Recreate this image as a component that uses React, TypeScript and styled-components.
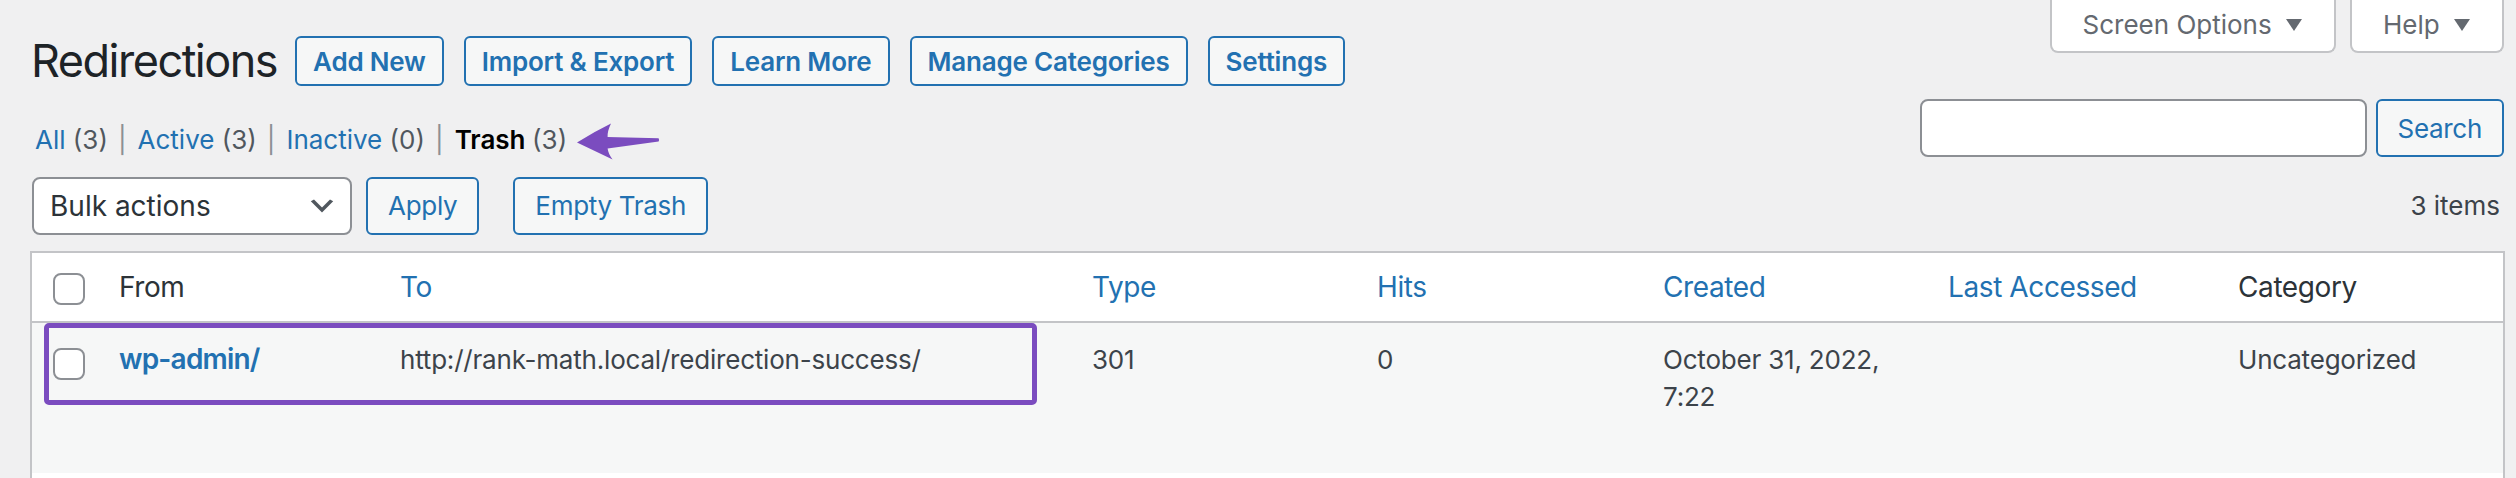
import React from "react"
import styled, { createGlobalStyle } from "styled-components"

const GlobalStyle = createGlobalStyle`
  html, body {
    margin: 0;
    padding: 0;
    background: #f0f0f1;
  }
  body {
    font-family: Inter, "Noto Sans", sans-serif;
    color: #3c434a;
    overflow: hidden;
  }
  * {
    box-sizing: border-box;
  }
`

const columns = [
  { label: "", width: 33.5 },
  { label: "From", width: 140.5 },
  { label: "To", width: 346, sortable: true },
  { label: "Type", width: 142.5, sortable: true },
  { label: "Hits", width: 143, sortable: true },
  { label: "Created", width: 142.5, sortable: true },
  { label: "Last Accessed", width: 145, sortable: true },
  { label: "Category" },
]

const views = [
  { text: "All", count: 3 },
  { text: "Active", count: 3 },
  { text: "Inactive", count: 0 },
  { text: "Trash", count: 3, current: true },
]

const titleActions = ["Add New", "Import & Export", "Learn More", "Manage Categories", "Settings"]

const Arrow = () => (
  <ArrowSvg viewBox="0 0 42 19" aria-hidden="true">
    <path d="M0.5 10.3 Q9 4.8 17.5 0.7 Q15.6 4.6 15.8 7.5 L41.3 8.1 Q41.8 9 41.3 9.8 L15.8 13.3 Q16.2 16.2 18.3 18.7 Q9 14.4 0.5 10.3 Z" />
  </ArrowSvg>
)

const Caret = () => (
  <CaretSvg viewBox="0 0 8 6" aria-hidden="true">
    <polygon points="0,0 8,0 4,6" />
  </CaretSvg>
)

const Chevron = () => (
  <ChevronSvg viewBox="0 0 20 20" aria-hidden="true">
    <path d="M5 6l5 5 5-5 2 1-7 7-7-7 2-1z" />
  </ChevronSvg>
)

const App = () => {
  return (
    <>
      <GlobalStyle />
      <Page>
        <Top>
          <Main>
            <TitleRow>
              <Title>Redirections</Title>
              {titleActions.map(a => (
                <TitleAction key={a} href="#">
                  {a}
                </TitleAction>
              ))}
            </TitleRow>
            <Views>
              {views.map((v, i) => (
                <ViewItem key={v.text}>
                  <ViewLink href="#" $current={v.current}>
                    {v.text} <Count>({v.count})</Count>
                  </ViewLink>
                  {i < views.length - 1 && <Sep>|</Sep>}
                </ViewItem>
              ))}
              <Arrow />
            </Views>
          </Main>
          <Side>
            <MetaLinks>
              <MetaTab>
                Screen Options <Caret />
              </MetaTab>
              <MetaTab>
                Help <Caret />
              </MetaTab>
            </MetaLinks>
            <SearchBox>
              <SearchInput type="search" />
              <Button>Search</Button>
            </SearchBox>
          </Side>
        </Top>

        <TableNav>
          <BulkSelect>
            Bulk actions
            <Chevron />
          </BulkSelect>
          <Button $gap={7}>Apply</Button>
          <Button $gap={17}>Empty Trash</Button>
          <ItemCount>3 items</ItemCount>
        </TableNav>

        <TableWrap>
          <Table>
            <colgroup>
              {columns.map((c, i) => (
                <col key={i} style={c.width ? { width: c.width } : undefined} />
              ))}
            </colgroup>
            <thead>
              <tr>
                <HeadCheck>
                  <Checkbox />
                </HeadCheck>
                {columns.slice(1).map(c => (
                  <HeadCell key={c.label} $link={c.sortable}>
                    {c.label}
                  </HeadCell>
                ))}
              </tr>
            </thead>
            <tbody>
              <Row $alt>
                <CheckCell>
                  <Checkbox />
                </CheckCell>
                <Cell>
                  <RowTitle href="#">wp-admin/</RowTitle>
                </Cell>
                <Cell>http://rank-math.local/redirection-success/</Cell>
                <Cell>301</Cell>
                <Cell>0</Cell>
                <Cell>October 31, 2022, 7:22</Cell>
                <Cell />
                <Cell>Uncategorized</Cell>
              </Row>
              <Row>
                <Cell colSpan={8} />
              </Row>
            </tbody>
          </Table>
          <Highlight />
        </TableWrap>
      </Page>
    </>
  )
}

export default App

const Page = styled.div`
  zoom: 2;
  height: 239px;
  overflow: hidden;
  padding: 0 6px 0 15px;
  font-size: 13px;
`

const Top = styled.div`
  display: flex;
  justify-content: space-between;
  height: 82.8px;
`

const Main = styled.div`
  display: flex;
  flex-direction: column;
`

const TitleRow = styled.div`
  display: flex;
  align-items: center;
  padding-top: 15.5px;
`

const Title = styled.h1`
  margin: 0 9px 0 0.5px;
  font-size: 22.5px;
  font-weight: 400;
  line-height: 30px;
  letter-spacing: -0.75px;
  color: #1d2327;
`

const TitleAction = styled.a`
  display: inline-flex;
  align-items: center;
  height: 25px;
  padding: 0 8px;
  border: 1px solid #2271b1;
  border-radius: 3px;
  background: #f6f7f7;
  color: #2271b1;
  font-size: 13px;
  font-weight: 600;
  letter-spacing: -0.1px;
  text-decoration: none;
  white-space: nowrap;
  & + & {
    margin-left: 10px;
  }
`

const Views = styled.ul`
  display: flex;
  align-items: center;
  margin: 11.3px 0 0 2.5px;
  padding: 0;
  list-style: none;
  font-size: 13px;
  line-height: 26px;
  color: #646970;
`

const ViewItem = styled.li`
  display: flex;
  white-space: pre;
`

const ViewLink = styled.a<{ $current?: boolean }>`
  color: ${p => (p.$current ? "#000" : "#2271b1")};
  font-weight: ${p => (p.$current ? 600 : 400)};
  text-decoration: none;
`

const Count = styled.span`
  color: #50575e;
  font-weight: 400;
`

const Sep = styled.span`
  margin: 0 5.5px 0 5px;
  color: #8c8f94;
`

const ArrowSvg = styled.svg`
  width: 42px;
  height: 19px;
  margin: 1.4px 0 0 4.5px;
  fill: #7b4cbf;
`

const Side = styled.div`
  display: flex;
  flex-direction: column;
  align-items: flex-end;
`

const MetaLinks = styled.div`
  display: flex;
  gap: 7px;
`

const MetaTab = styled.div`
  display: flex;
  align-items: center;
  height: 26.5px;
  padding: 1px 16px 1.5px 15.5px;
  border: 1px solid #c3c4c7;
  border-top: none;
  border-radius: 0 0 4px 4px;
  background: #fff;
  color: #646970;
  font-size: 13px;
  line-height: 22px;
  white-space: pre;
`

const CaretSvg = styled.svg`
  width: 8px;
  height: 6px;
  margin-left: 3.5px;
  fill: #646970;
`

const SearchBox = styled.div`
  display: flex;
  gap: 4.5px;
  margin-top: 23px;
`

const SearchInput = styled.input`
  width: 223.5px;
  height: 29px;
  margin: 0;
  border: 1px solid #8c8f94;
  border-radius: 4px;
  background: #fff;
  outline: none;
`

const Button = styled.button<{ $gap?: number }>`
  height: 29px;
  margin: 0 0 0 ${p => p.$gap || 0}px;
  padding: 0 10px;
  border: 1px solid #2271b1;
  border-radius: 3px;
  background: #f6f7f7;
  color: #2271b1;
  font-family: inherit;
  font-size: 13px;
  letter-spacing: -0.15px;
  white-space: nowrap;
`

const TableNav = styled.div`
  display: flex;
  align-items: center;
  height: 29px;
  margin-top: 5.7px;
`

const BulkSelect = styled.div`
  display: flex;
  align-items: center;
  justify-content: space-between;
  width: 160px;
  height: 29px;
  margin-left: 1px;
  padding: 0 6px 0 8px;
  border: 1px solid #8c8f94;
  border-radius: 4px;
  background: #fff;
  color: #2c3338;
  font-size: 14px;
`

const ChevronSvg = styled.svg`
  width: 16px;
  height: 16px;
  fill: #50575e;
`

const ItemCount = styled.span`
  margin: 0 2px 0 auto;
  color: #3c434a;
  font-size: 13px;
`

const TableWrap = styled.div`
  position: relative;
  margin: 8px -0.5px 0 0;
  border: 1px solid #c3c4c7;
  background: #fff;
`

const Table = styled.table`
  width: 100%;
  table-layout: fixed;
  border-collapse: collapse;
  border-spacing: 0;
`

const HeadCell = styled.th<{ $link?: boolean }>`
  height: 34.5px;
  padding: 0 10px;
  border-bottom: 1px solid #c3c4c7;
  text-align: left;
  font-size: 14px;
  font-weight: 400;
  letter-spacing: -0.2px;
  color: ${p => (p.$link ? "#2271b1" : "#2c3338")};
  white-space: nowrap;
`

const HeadCheck = styled.th`
  padding: 2px 0 0 10.5px;
  border-bottom: 1px solid #c3c4c7;
  text-align: left;
`

const Row = styled.tr<{ $alt?: boolean }>`
  height: 75.5px;
  background: ${p => (p.$alt ? "#f6f7f7" : "#fff")};
`

const Cell = styled.td`
  padding: 9px 10px 0;
  vertical-align: top;
  font-size: 13px;
  line-height: 18.5px;
  letter-spacing: -0.1px;
  color: #3c434a;
`

const CheckCell = styled.td`
  padding: 12.5px 0 0 10.5px;
  vertical-align: top;
`

const RowTitle = styled.a`
  color: #2271b1;
  font-size: 14px;
  font-weight: 600;
  letter-spacing: -0.4px;
  text-decoration: none;
`

const Checkbox = styled.span`
  display: block;
  width: 16px;
  height: 16px;
  border: 1px solid #8c8f94;
  border-radius: 4px;
  background: #fff;
`

const Highlight = styled.div`
  position: absolute;
  left: 6px;
  top: 35px;
  width: 496.5px;
  height: 41px;
  border: 2.5px solid #7b4cbf;
  border-radius: 2.5px;
  pointer-events: none;
`
